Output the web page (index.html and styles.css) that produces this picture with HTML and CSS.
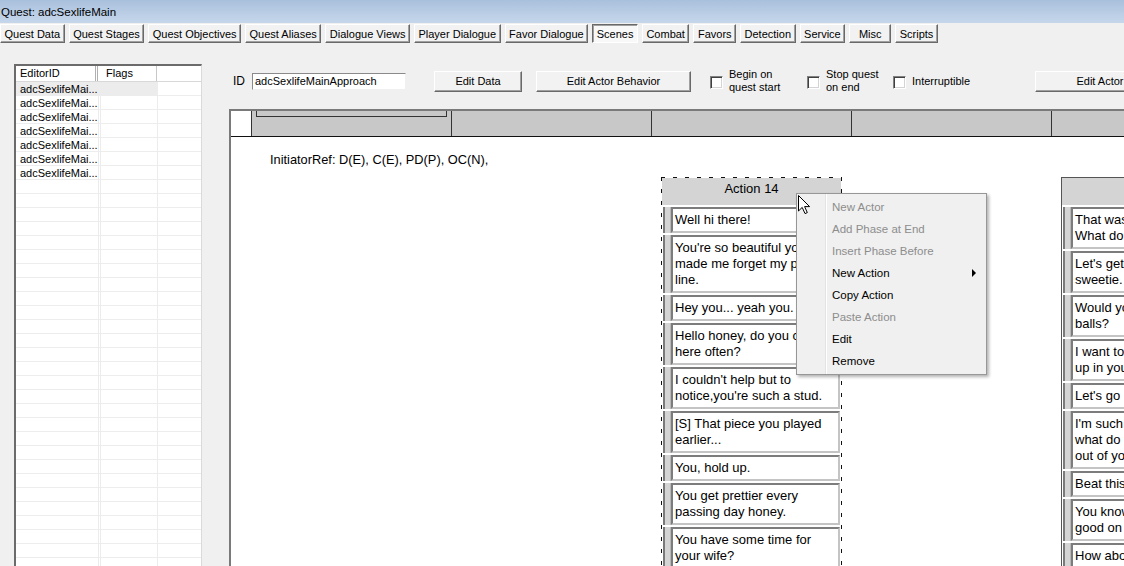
FILE: index.html
```html
<!DOCTYPE html>
<html lang="en">
<head>
  <meta charset="UTF-8" />
  <title>Quest: adcSexlifeMain</title>
  <link rel="stylesheet" href="styles.css">
</head>
<body>
  <div class="titlebar">Quest: adcSexlifeMain</div>

  <div class="tabs">
    <button class="tab">Quest Data</button>
    <button class="tab">Quest Stages</button>
    <button class="tab">Quest Objectives</button>
    <button class="tab">Quest Aliases</button>
    <button class="tab">Dialogue Views</button>
    <button class="tab">Player Dialogue</button>
    <button class="tab">Favor Dialogue</button>
    <button class="tab active">Scenes</button>
    <button class="tab">Combat</button>
    <button class="tab">Favors</button>
    <button class="tab">Detection</button>
    <button class="tab">Service</button>
    <button class="tab">Misc</button>
    <button class="tab">Scripts</button>
  </div>

  <div class="main">
    <div class="sidebar">
      <div class="list">
        <div class="list-head">
          <div class="head-col col-id">EditorID</div>
          <div class="head-col col-flags">Flags</div>
          <div class="head-col col-extra"></div>
        </div>
        <div class="list-body">
          <div class="list-row sel">adcSexlifeMai...</div>
          <div class="list-row">adcSexlifeMai...</div>
          <div class="list-row">adcSexlifeMai...</div>
          <div class="list-row">adcSexlifeMai...</div>
          <div class="list-row">adcSexlifeMai...</div>
          <div class="list-row">adcSexlifeMai...</div>
          <div class="list-row">adcSexlifeMai...</div>
        </div>
      </div>
    </div>

    <div class="content">
      <div class="toolbar">
        <div class="toolbar-row">
          <span class="id-label">ID</span>
          <input class="id-input" value="adcSexlifeMainApproach" />
          <button class="btn btn-data">Edit Data</button>
          <button class="btn btn-behavior">Edit Actor Behavior</button>
          <label class="check check-begin"><span class="check-box"></span><span class="check-text">Begin on<br>quest start</span></label>
          <label class="check check-stop"><span class="check-box"></span><span class="check-text">Stop quest<br>on end</span></label>
          <label class="check check-int"><span class="check-box"></span><span class="check-text">Interruptible</span></label>
          <button class="btn btn-actor">Edit Actor</button>
        </div>
      </div>

      <div class="scene">
        <div class="scene-head">
          <div class="head-corner"></div>
          <div class="head-cell"><div class="head-frame"></div></div>
          <div class="head-cell"></div>
          <div class="head-cell"></div>
          <div class="head-cell"></div>
          <div class="head-cell"></div>
        </div>
        <div class="scene-body">
          <div class="initiator">InitiatorRef: D(E), C(E), PD(P), OC(N),</div>
          <div class="phases">
            <div class="phase"></div>
            <div class="phase"></div>
            <div class="phase">
              <div class="action selected">
                <div class="action-head">Action 14</div>
                <div class="line"><span class="strip"></span><div class="box">Well hi there!</div></div>
                <div class="line"><span class="strip"></span><div class="box">You're so beautiful you<br>made me forget my pickup<br>line.</div></div>
                <div class="line"><span class="strip"></span><div class="box">Hey you... yeah you.</div></div>
                <div class="line"><span class="strip"></span><div class="box">Hello honey, do you come<br>here often?</div></div>
                <div class="line"><span class="strip"></span><div class="box">I couldn't help but to<br>notice,you're such a stud.</div></div>
                <div class="line"><span class="strip"></span><div class="box">[S] That piece you played<br>earlier...</div></div>
                <div class="line"><span class="strip"></span><div class="box">You, hold up.</div></div>
                <div class="line"><span class="strip"></span><div class="box">You get prettier every<br>passing day honey.</div></div>
                <div class="line"><span class="strip"></span><div class="box">You have some time for<br>your wife?</div></div>
              </div>
            </div>
            <div class="phase"></div>
            <div class="phase">
              <div class="action">
                <div class="action-head">Action 15</div>
                <div class="line"><span class="strip"></span><div class="box">That was wonderful.<br>What do you say?</div></div>
                <div class="line"><span class="strip"></span><div class="box">Let's get going,<br>sweetie.</div></div>
                <div class="line"><span class="strip"></span><div class="box">Would you like a game of<br>balls?</div></div>
                <div class="line"><span class="strip"></span><div class="box">I want to meet you<br>up in your room.</div></div>
                <div class="line"><span class="strip"></span><div class="box">Let's go home.</div></div>
                <div class="line"><span class="strip"></span><div class="box">I'm such a lucky one,<br>what do you want<br>out of your day?</div></div>
                <div class="line"><span class="strip"></span><div class="box">Beat this one.</div></div>
                <div class="line"><span class="strip"></span><div class="box">You know that looks<br>good on you.</div></div>
                <div class="line"><span class="strip"></span><div class="box">How about a drink<br>later?</div></div>
              </div>
            </div>
          </div>
        </div>
      </div>
    </div>
  </div>

  <!-- right-click menu over the selected action -->
  <div class="menu">
    <div class="menu-item disabled">New Actor</div>
    <div class="menu-item disabled">Add Phase at End</div>
    <div class="menu-item disabled">Insert Phase Before</div>
    <div class="menu-item">New Action<span class="menu-arrow"></span></div>
    <div class="menu-item">Copy Action</div>
    <div class="menu-item disabled">Paste Action</div>
    <div class="menu-item">Edit</div>
    <div class="menu-item">Remove</div>
  </div>

  <svg class="cursor" width="14" height="21" viewBox="0 0 14 21">
    <path d="M1.5 1.5 V17 L5.2 13.4 L8 19.6 L10.3 18.6 L7.6 12.6 H12.6 Z" fill="#fff" stroke="#000" stroke-width="1" stroke-linejoin="miter"/>
  </svg>
</body>
</html>
```

FILE: styles.css
```css
* {
  box-sizing: border-box;
}
html, body {
  margin: 0;
}
body {
  width: 1124px;
  height: 566px;
  overflow: hidden;
  position: relative;
  background: #f0f0f0;
  font-family: "Liberation Sans", Arial, sans-serif;
  font-size: 11px;
  color: #000;
}

.titlebar {
  height: 23px;
  padding: 4px 0 0 1px;
  font-size: 11.5px;
  line-height: 16px;
  background: linear-gradient(#a9c0dc, #c6d7eb);
}

.tabs {
  display: flex;
  gap: 4px;
  height: 21px;
  padding-top: 1px;
}
.tab, .btn {
  margin: 0;
  font-family: "Liberation Sans", Arial, sans-serif;
  font-size: 11px;
  color: #000;
  background: #f2f2f2;
  border: 1px solid;
  border-color: #fff #696969 #696969 #fff;
  box-shadow: inset -1px -1px #a0a0a0;
  white-space: nowrap;
}
.tab {
  height: 19px;
  min-width: 42px;
  padding: 0 3.5px;
}
.tab.active {
  background: #f8f8f8;
  border-color: #696969 #fff #fff #696969;
  box-shadow: inset 1px 1px #a0a0a0;
  padding-top: 1px;
}

.main {
  display: flex;
  height: 522px;
}

/* scene list */
.sidebar {
  width: 229px;
  flex: none;
  padding: 20px 0 0 14px;
}
.list {
  width: 188px;
  height: 100%;
  display: flex;
  flex-direction: column;
  background: #fff;
  border-top: 2px solid #6b6b6b;
  border-left: 2px solid #6b6b6b;
  border-right: 1px solid #dadada;
}
.list-head {
  display: flex;
  height: 16px;
  border-bottom: 1px solid #d8d8d8;
}
.head-col {
  line-height: 15px;
  border-right: 1px solid #c8c8c8;
}
.col-id {
  width: 82px;
  padding-left: 4px;
  border-right: 3px double #b0b0b0;
}
.col-flags {
  width: 59px;
  padding-left: 8px;
}
.col-extra {
  flex: 1;
  border-right: none;
}
.list-body {
  flex: 1;
  background:
    linear-gradient(to right, transparent 82px, #ececec 82px 83px, transparent 83px 84px, #ececec 84px 85px, transparent 85px 141px, #ececec 141px 142px, transparent 142px),
    repeating-linear-gradient(to bottom, #fff 0 13px, #ededed 13px 14px);
}
.list-row {
  height: 14px;
  line-height: 14px;
  padding-left: 4px;
  width: 141px;
}
.list-row.sel {
  background: #ececec;
}

/* editor area */
.content {
  flex: 1;
  min-width: 0;
  overflow: hidden;
  display: flex;
  flex-direction: column;
}
.toolbar {
  height: 65px;
  flex: none;
  padding: 26px 0 0 4px;
}
.toolbar-row {
  display: flex;
  align-items: center;
  height: 22px;
}
.id-label {
  font-size: 12px;
  width: 19px;
  flex: none;
}
.id-input {
  width: 154px;
  height: 17px;
  flex: none;
  padding: 0 2px;
  font-family: "Liberation Sans", Arial, sans-serif;
  font-size: 11px;
  background: #fff;
  border: 1px solid;
  border-color: #8a8a8a #f0f0f0 #f0f0f0 #8a8a8a;
  outline: none;
}
.btn {
  height: 21px;
  flex: none;
}
.btn-data {
  width: 88px;
  margin-left: 28px;
}
.btn-behavior {
  width: 155px;
  margin-left: 14px;
}
.btn-actor {
  width: 130px;
}
.check {
  display: flex;
  align-items: center;
  flex: none;
  line-height: 13px;
  font-size: 11px;
}
.check-begin {
  width: 97px;
  margin-left: 19px;
}
.check-stop {
  width: 86px;
}
.check-int {
  width: 142px;
}
.check-box {
  width: 13px;
  height: 13px;
  flex: none;
  margin: 2px 6px 0 0;
  background: #fff;
  border: 1px solid;
  border-color: #808080 #fff #fff #808080;
  box-shadow: inset 1px 1px #404040, inset -1px -1px #d4d4d4;
}

/* scene canvas */
.scene {
  flex: 1;
  overflow: hidden;
  background: #fff;
  border-top: 2px solid #7a7a7a;
  border-left: 2px solid #7a7a7a;
}
.scene-head {
  display: flex;
  height: 26px;
  background: #c8c8c8;
  border-bottom: 1px solid #111;
}
.head-corner {
  width: 21px;
  flex: none;
  background: #fff;
  border-right: 1px solid #333;
}
.head-cell {
  width: 200px;
  flex: none;
  border-right: 1px solid #333;
}
.head-frame {
  height: 6px;
  margin: 0 4px;
  border: 1px solid #333;
  border-top: none;
}
.initiator {
  padding: 16px 0 0 39px;
  font-size: 12.8px;
  line-height: 14px;
}
.phases {
  display: flex;
  margin-top: 10px;
  padding-left: 21px;
}
.phase {
  width: 200px;
  flex: none;
}
.action {
  width: 181px;
  margin-left: 9px;
  background: #fff;
  border: 1px solid #555;
}
.action.selected {
  border: none;
  padding: 1px;
  background:
    repeating-linear-gradient(to bottom, #111 0 4px, transparent 4px 12px) left top / 1px 100% no-repeat,
    repeating-linear-gradient(to bottom, #111 0 4px, transparent 4px 12px) right top / 1px 100% no-repeat,
    repeating-linear-gradient(to right, #111 0 4px, transparent 4px 12px) left top / 100% 1px no-repeat,
    repeating-linear-gradient(to right, #111 0 4px, transparent 4px 12px) left bottom / 100% 1px no-repeat,
    #fff;
}
.action-head {
  height: 27px;
  padding-top: 3px;
  background: #d4d4d4;
  text-align: center;
  font-size: 13px;
  line-height: 16px;
}
.line {
  display: flex;
  margin: 2px 1px 0 1px;
}
.strip {
  width: 8px;
  flex: none;
  background: #d4d4d4;
  border-left: 2px solid #7a7a7a;
  border-right: 1px solid #b8b8b8;
}
.box {
  flex: 1;
  padding: 3px 2px;
  font-size: 13px;
  line-height: 16px;
  white-space: nowrap;
  overflow: hidden;
  background: #fff;
  border: 2px solid;
  border-color: #7c7c7c #c4c4c4 #c4c4c4 #7c7c7c;
}

/* context menu */
.menu {
  position: absolute;
  left: 796px;
  top: 193px;
  width: 191px;
  padding: 2px 0;
  font-size: 11.5px;
  color: #000;
  background:
    linear-gradient(to right, transparent 28px, #e2e3e3 28px 29px, #fff 29px 30px, transparent 30px),
    #f0f0f0;
  border: 1px solid #979797;
  box-shadow: 2px 2px 3px rgba(0, 0, 0, 0.3);
}
.menu-item {
  position: relative;
  height: 22px;
  line-height: 22px;
  padding-left: 35px;
}
.menu-item.disabled {
  color: #8d8d8d;
}
.menu-arrow {
  position: absolute;
  right: 10px;
  top: 7px;
  width: 0;
  height: 0;
  border-left: 4px solid #000;
  border-top: 4px solid transparent;
  border-bottom: 4px solid transparent;
}

.cursor {
  position: absolute;
  left: 797px;
  top: 194px;
}
```
